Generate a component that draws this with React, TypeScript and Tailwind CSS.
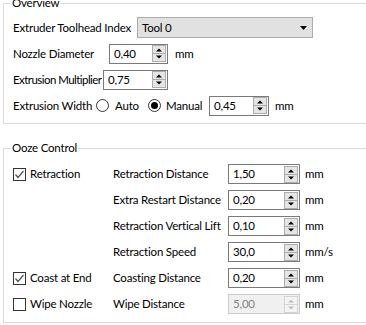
import React from "react";
import clsx from "clsx";

const SpinArrows = ({ disabled }: { disabled?: boolean }) => {
  const fill = disabled ? "#bcbcbc" : "#000000";
  return (
    <svg width="14" height="17" viewBox="0 0 14 17" className="shrink-0">
      <rect x="0.5" y="0.5" width="13" height="16" fill={disabled ? "#f4f4f4" : "#e5e5e5"} stroke={disabled ? "#d4d4d4" : "#adadad"} />
      <line x1="1" y1="8.5" x2="13" y2="8.5" stroke={disabled ? "#d4d4d4" : "#adadad"} />
      <path d="M4 6.5 L10 6.5 L7 3.5 Z" fill={fill} />
      <path d="M4 10.5 L10 10.5 L7 13.5 Z" fill={fill} />
    </svg>
  );
};

const SpinBox = ({
  value,
  width,
  disabled,
}: {
  value: string;
  width: string;
  disabled?: boolean;
}) => (
  <div
    className={clsx(
      "flex h-[20px] items-center border pl-[4px] pr-[1px]",
      width,
      disabled
        ? "border-[#cccccc] bg-[#f0f0f0] text-[#838383]"
        : "border-[#7a7a7a] bg-white"
    )}
  >
    <span className="flex-1 leading-none">{value}</span>
    <SpinArrows disabled={disabled} />
  </div>
);

const CheckBox = ({ checked }: { checked?: boolean }) => (
  <svg width="13" height="13" viewBox="0 0 13 13" className="shrink-0">
    <rect x="0.5" y="0.5" width="12" height="12" fill="#ffffff" stroke="#333333" />
    {checked && (
      <polyline points="2.5,6.5 5,9.5 10.5,3" fill="none" stroke="#505050" strokeWidth="1.2" />
    )}
  </svg>
);

const Radio = ({ checked }: { checked?: boolean }) => (
  <svg width="13" height="13" viewBox="0 0 13 13" className="shrink-0">
    <circle cx="6.5" cy="6.5" r="6" fill="#ffffff" stroke="#333333" />
    {checked && <circle cx="6.5" cy="6.5" r="3.5" fill="#000000" />}
  </svg>
);

const oozeRows = [
  { check: "Retraction", checked: true, label: "Retraction Distance", value: "1,50", unit: "mm" },
  { label: "Extra Restart Distance", value: "0,20", unit: "mm" },
  { label: "Retraction Vertical Lift", value: "0,10", unit: "mm" },
  { label: "Retraction Speed", value: "30,0", unit: "mm/s" },
  { check: "Coast at End", checked: true, label: "Coasting Distance", value: "0,20", unit: "mm" },
  { check: "Wipe Nozzle", checked: false, label: "Wipe Distance", value: "5,00", unit: "mm", disabled: true },
];

export default function App() {
  return (
    <div className="h-[325px] w-[366px] overflow-hidden whitespace-nowrap bg-white font-['Lato',sans-serif] text-[11.5px] tracking-[-0.2px] text-black">
      <fieldset className="-mt-[5px] ml-[3px] w-[420px] border border-[#dcdcdc] pb-[7px] pl-[9px] pt-[6px]">
        <legend className="-ml-[2px] px-[1px] leading-[16px]">Overview</legend>
        <div className="flex flex-col gap-[5px]">
          <div className="flex h-[21px] items-center">
            <span className="w-[124px]">Extruder Toolhead Index</span>
            <div className="flex h-[21px] w-[176px] items-center justify-between border border-[#adadad] bg-[#e1e1e1] pl-[4px] pr-[5px]">
              <span>Tool 0</span>
              <svg width="7" height="4" viewBox="0 0 7 4">
                <path d="M0 0 L7 0 L3.5 4 Z" fill="#000000" />
              </svg>
            </div>
          </div>
          <div className="flex h-[21px] items-center">
            <span className="w-[96px]">Nozzle Diameter</span>
            <SpinBox value="0,40" width="w-[59px]" />
            <span className="ml-[7px]">mm</span>
          </div>
          <div className="flex h-[21px] items-center">
            <span className="w-[90px] tracking-[-0.55px]">Extrusion Multiplier</span>
            <SpinBox value="0,75" width="w-[65px]" />
          </div>
          <div className="flex h-[21px] items-center">
            <span className="w-[83px]">Extrusion Width</span>
            <Radio />
            <span className="ml-[6px] w-[33px]">Auto</span>
            <Radio checked />
            <span className="ml-[5px] w-[43px]">Manual</span>
            <SpinBox value="0,45" width="w-[60px]" />
            <span className="ml-[6px]">mm</span>
          </div>
        </div>
      </fieldset>

      <fieldset className="ml-[3px] mt-[16px] w-[420px] border border-[#dcdcdc] pb-[8px] pl-[9px] pt-[8px]">
        <legend className="-ml-[2px] px-[1px] leading-[16px]">Ooze Control</legend>
        <div className="grid grid-cols-[100px_115px_72px_auto] gap-y-[6px]">
          {oozeRows.map((r, i) => (
            <React.Fragment key={i}>
              <div className="flex h-[20px] items-center gap-[4px]">
                {r.check && (
                  <>
                    <CheckBox checked={r.checked} />
                    <span>{r.check}</span>
                  </>
                )}
              </div>
              <div className="flex h-[20px] items-center">{r.label}</div>
              <SpinBox value={r.value} width="w-[72px]" disabled={r.disabled} />
              <div className="flex h-[20px] items-center pl-[5px]">{r.unit}</div>
            </React.Fragment>
          ))}
        </div>
      </fieldset>
    </div>
  );
}
